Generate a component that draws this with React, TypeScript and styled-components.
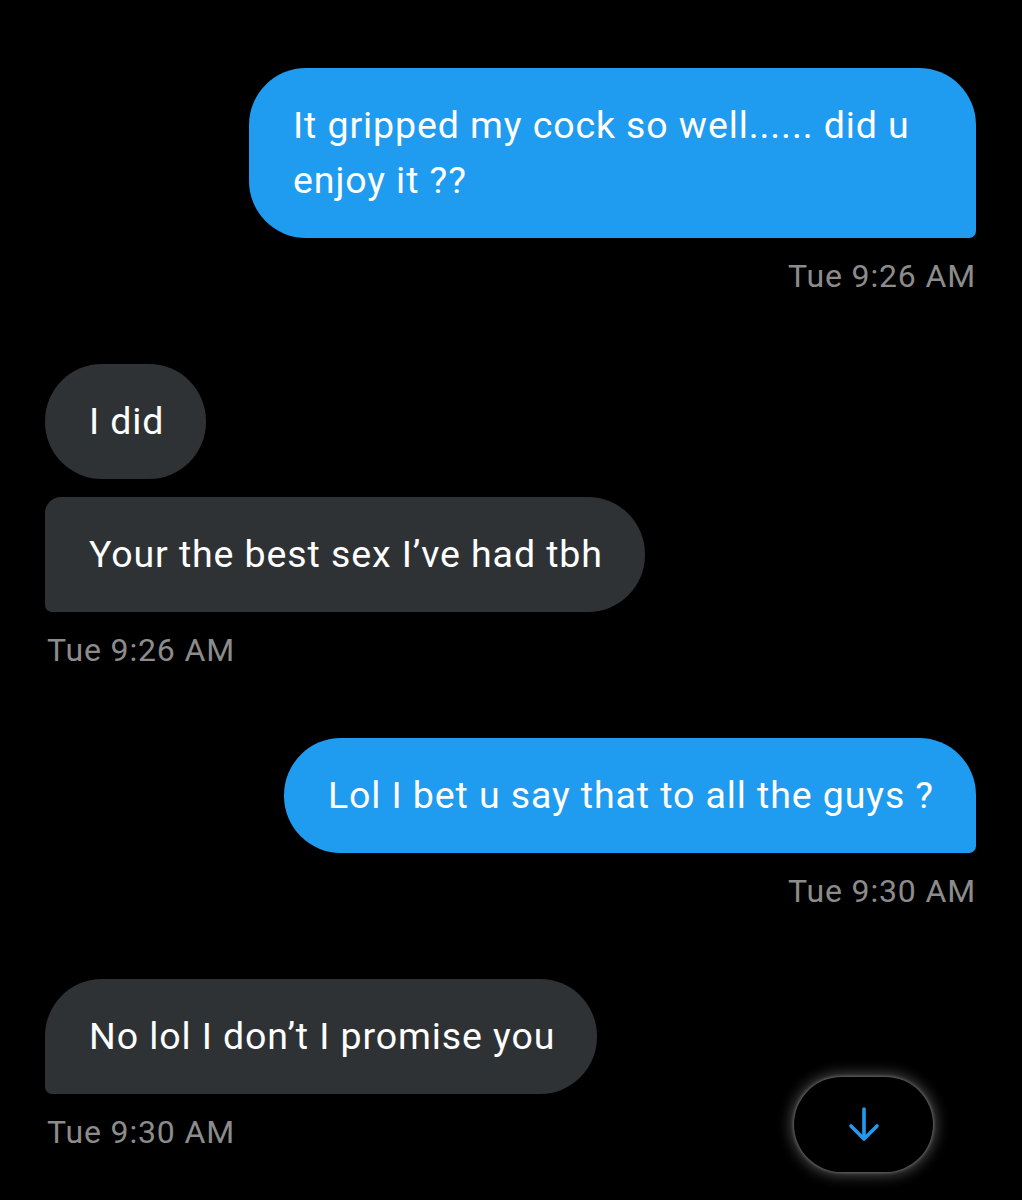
import React from "react";
import styled, { createGlobalStyle } from "styled-components";

const Global = createGlobalStyle`
  html, body {
    margin: 0;
    padding: 0;
    background: #000;
  }
  body {
    font-family: Roboto, "Noto Sans", "Liberation Sans", sans-serif;
    -webkit-font-smoothing: antialiased;
  }
`;

const Screen = styled.div`
  position: relative;
  width: 1022px;
  height: 1200px;
  background: #000;
  overflow: hidden;
  box-sizing: border-box;
  padding: 68px 46px 0 45px;
  display: flex;
  flex-direction: column;
`;

const Group = styled.div<{ $side: "in" | "out"; $gap: number }>`
  display: flex;
  flex-direction: column;
  align-items: ${(p) => (p.$side === "out" ? "flex-end" : "flex-start")};
  gap: 18px;
  margin-top: ${(p) => p.$gap}px;
`;

type Radii = [number, number, number, number];

const Bubble = styled.div<{ $side: "in" | "out"; $r: Radii; $w?: number }>`
  box-sizing: border-box;
  background: ${(p) => (p.$side === "out" ? "#1f9cef" : "#2f3235")};
  color: #fff;
  font-size: 37.5px;
  line-height: 55px;
  letter-spacing: 0.9px;
  padding: 30px 42px 30px 44px;
  border-radius: ${(p) => p.$r.map((v) => `${v}px`).join(" ")};
  max-width: ${(p) => (p.$w ? `${p.$w}px` : "none")};
`;

const Stamp = styled.div<{ $side: "in" | "out" }>`
  align-self: ${(p) => (p.$side === "out" ? "flex-end" : "flex-start")};
  color: #8c8c8c;
  font-size: 32px;
  line-height: 38px;
  letter-spacing: 0.85px;
  margin-top: 1px;
  padding: 0 0 0 2px;
`;

const ScrollButton = styled.button`
  position: absolute;
  left: 794px;
  top: 1077px;
  width: 139px;
  height: 95px;
  border-radius: 48px;
  border: none;
  background: #000;
  box-shadow: 0 0 14px 3px rgba(255, 255, 255, 0.3), 0 0 3px 1px rgba(255, 255, 255, 0.25);
  display: flex;
  align-items: center;
  justify-content: center;
  padding: 0;
`;

const Arrow = () => (
  <svg width="36" height="40" viewBox="0 0 36 40" fill="none">
    <path
      d="M18 4 V33 M5 21 L18 34 L31 21"
      stroke="#1f9cef"
      strokeWidth="3.6"
      strokeLinecap="round"
      strokeLinejoin="round"
    />
  </svg>
);

export default function App() {
  return (
    <>
      <Global />
      <Screen>
        <Group $side="out" $gap={0}>
          <Bubble $side="out" $r={[57, 57, 7, 57]} $w={727}>
            It gripped my cock so well...... did u enjoy it ??
          </Bubble>
          <Stamp $side="out">Tue 9:26 AM</Stamp>
        </Group>

        <Group $side="in" $gap={69}>
          <Bubble $side="in" $r={[57, 57, 57, 57]}>I did</Bubble>
          <Bubble $side="in" $r={[16, 57, 57, 7]}>
            Your the best sex I’ve had tbh
          </Bubble>
          <Stamp $side="in">Tue 9:26 AM</Stamp>
        </Group>

        <Group $side="out" $gap={69}>
          <Bubble $side="out" $r={[57, 57, 7, 57]}>
            Lol I bet u say that to all the guys ?
          </Bubble>
          <Stamp $side="out">Tue 9:30 AM</Stamp>
        </Group>

        <Group $side="in" $gap={69}>
          <Bubble $side="in" $r={[57, 57, 57, 7]}>
            No lol I don’t I promise you
          </Bubble>
          <Stamp $side="in">Tue 9:30 AM</Stamp>
        </Group>

        <ScrollButton aria-label="Scroll to bottom">
          <Arrow />
        </ScrollButton>
      </Screen>
    </>
  );
}
